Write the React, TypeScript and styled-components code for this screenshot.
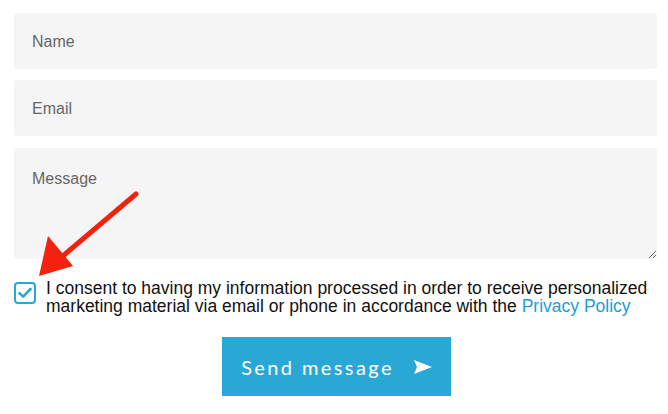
import React from "react"
import styled, { createGlobalStyle } from "styled-components"

const GlobalStyle = createGlobalStyle`
  body {
    margin: 0;
    background: #fff;
    font-family: "Liberation Sans", Arial, sans-serif;
  }
`

const Form = styled.form`
  position: relative;
  width: 668px;
  padding: 13px 11px 0 14px;
  box-sizing: border-box;
  display: flex;
  flex-direction: column;
`

const Field = styled.input`
  box-sizing: border-box;
  height: 56px;
  margin-bottom: 11px;
  border: none;
  border-radius: 3px;
  background: #f5f5f5;
  padding: 2px 18px 0;
  font-family: "Liberation Sans", Arial, sans-serif;
  font-size: 16px;
  color: #333;
  outline: none;
  &::placeholder {
    color: #666;
  }
`

const MessageArea = styled.textarea`
  height: 111px;
  margin-top: 1px;
  border: none;
  border-radius: 3px;
  background: #f5f5f5;
  padding: 22px 18px;
  box-sizing: border-box;
  font-family: "Liberation Sans", Arial, sans-serif;
  font-size: 16px;
  resize: vertical;
  outline: none;
  &::placeholder {
    color: #666;
  }
`

const ConsentRow = styled.label`
  display: flex;
  align-items: flex-start;
  gap: 10px;
  margin-top: 20px;
  font-size: 17.5px;
  line-height: 18px;
  color: #111;
`

const Box = styled.span`
  flex: none;
  width: 18px;
  height: 18px;
  margin-top: 3px;
  border: 2px solid #29a8d6;
  border-radius: 4px;
  display: flex;
  align-items: center;
  justify-content: center;
`

const PolicyLink = styled.a`
  color: #1a9fd4;
  text-decoration: none;
`

const SendButton = styled.button`
  align-self: center;
  margin-top: 22px;
  margin-left: 2px;
  width: 229px;
  height: 59px;
  border: none;
  background: #29a8d6;
  color: #fff;
  font-family: "Lato", "Open Sans", sans-serif;
  font-size: 20px;
  letter-spacing: 2.4px;
  display: flex;
  align-items: center;
  justify-content: center;
  gap: 20px;
`

const Pointer = styled.svg`
  position: absolute;
  left: 0;
  top: 0;
  pointer-events: none;
`

export default function App() {
  return (
    <>
      <GlobalStyle />
      <Form onSubmit={(e) => e.preventDefault()}>
        <Field placeholder="Name" />
        <Field placeholder="Email" />
        <MessageArea placeholder="Message" />
        <ConsentRow>
          <Box>
            <svg width="14" height="12" viewBox="0 0 14 12">
              <path d="M1.5 6.2 L5.2 9.6 L12.5 2" fill="none" stroke="#29a8d6" strokeWidth="2.6" strokeLinecap="round" strokeLinejoin="round" />
            </svg>
          </Box>
          <span>
            I consent to having my information processed in order to receive personalized marketing material via email or phone in accordance with the{" "}
            <PolicyLink href="#">Privacy Policy</PolicyLink>
          </span>
        </ConsentRow>
        <SendButton type="submit">
          Send message
          <svg width="18" height="14" viewBox="0 0 18 14">
            <path d="M0 0 L18 7 L0 14 L3 7 Z" fill="#fff" />
          </svg>
        </SendButton>
        <Pointer width="668" height="414">
          <line x1="136" y1="194" x2="64" y2="255" stroke="#f2220f" strokeWidth="5" strokeLinecap="round" />
          <polygon points="39,276 48,236 73,266" fill="#f2220f" />
        </Pointer>
      </Form>
    </>
  )
}
